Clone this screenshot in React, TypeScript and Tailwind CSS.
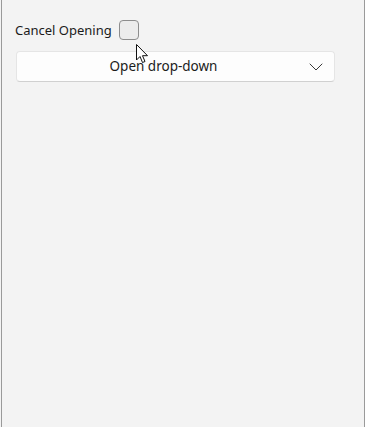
import { ChevronDown } from 'lucide-react';

export default function App() {
    return (
        <div className="w-[365px] h-[427px] bg-[#f3f3f3] pl-px overflow-hidden" style={{ fontFamily: '"Segoe UI", "Noto Sans", "Open Sans", sans-serif' }}>
            <div className="relative h-full border-l border-r border-[#9a9a9a] pl-[13px] pr-[28px] pt-[20px]">
                <div className="flex items-center h-[20px] gap-[7px]">
                    <span className="text-[13px] text-[#1b1b1b] leading-none">Cancel Opening</span>
                    <div className="w-[20px] h-[20px] rounded-[4px] border border-[#8d8d8d] bg-[#ececec]" />
                </div>
                <button className="mt-[11px] ml-px w-[319px] h-[31px] flex items-center rounded-[4px] bg-[#fdfdfd] border border-[#e5e5e5] border-b-[#d0d0d0] pl-[10px] pr-[6px]">
                    <span className="flex-1 text-center text-[13.5px] text-[#1b1b1b]">Open drop-down</span>
                    <ChevronDown className="ml-[4px] w-[24px] h-[24px] text-[#3a3a3a]" strokeWidth={1} />
                </button>
                <svg className="absolute left-[134px] top-[44px]" width="13" height="20" viewBox="0 0 13 20">
                    <path d="M0.5 0.5 L0.5 16 L4 12.5 L6.5 18.5 L9 17.5 L6.5 11.7 L11.5 11.7 Z" fill="#ffffff" stroke="#111111" strokeWidth="1" strokeLinejoin="round" />
                </svg>
            </div>
        </div>
    );
}
